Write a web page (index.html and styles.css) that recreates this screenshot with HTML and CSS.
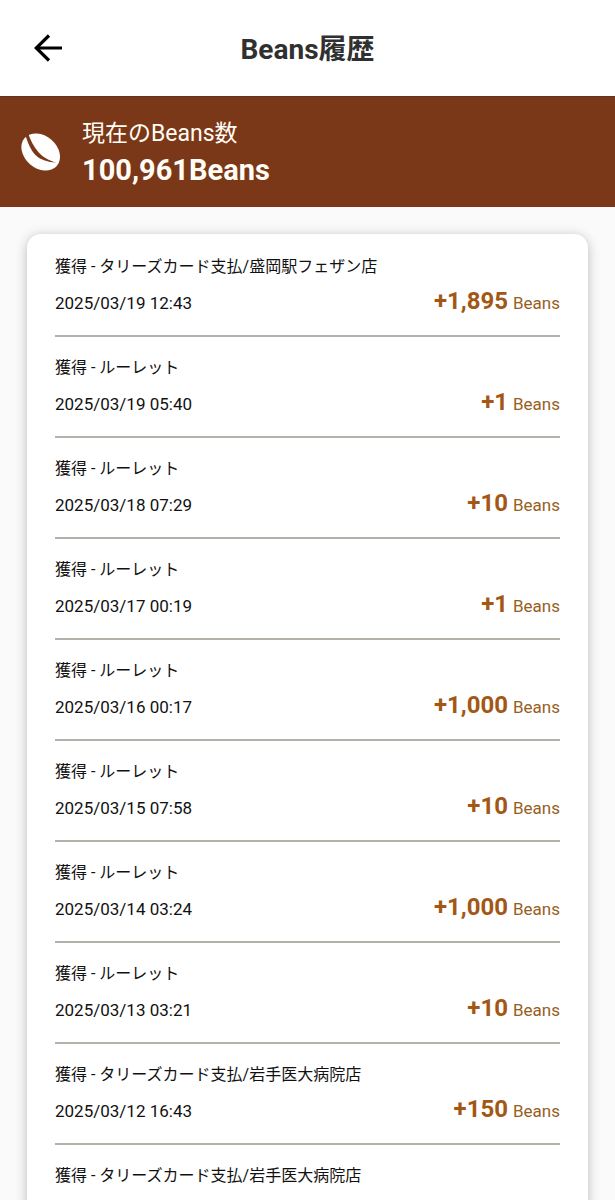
FILE: index.html
```html
<!DOCTYPE html>
<html lang="ja">
<head>
<meta charset="utf-8">
<meta name="viewport" content="width=device-width, initial-scale=1">
<title>Beans履歴</title>
<link rel="stylesheet" href="styles.css">
</head>
<body>
<header class="topbar">
  <button class="back" type="button" aria-label="戻る">
    <svg class="back-icon" viewBox="0 0 28 28" aria-hidden="true"><path d="M28 14H2M15 1.500L2.200 14L15 26.500" fill="none" stroke="currentColor" stroke-width="3.200"/></svg>
  </button>
  <h1 class="title">Beans履歴</h1>
</header>
<section class="balance">
  <svg class="bean" viewBox="0 0 40 38" aria-hidden="true">
    <ellipse cx="19.700" cy="19" rx="21.300" ry="16.300" transform="rotate(41 19.700 19)" fill="currentColor"/>
    <path class="bean-slit" d="M4.500 2.500L7.300 1C9.500 7 12.500 13.500 17.500 19.300C22 24.500 28 27.300 35 29.600C27 28.900 20 27.200 14.700 22.200C9.500 17 6.800 9.500 4.500 2.500Z"/>
  </svg>
  <div class="balance-text">
    <p class="balance-label">現在のBeans数</p>
    <p class="balance-value">100,961Beans</p>
  </div>
</section>
<main class="content">
  <ul class="history">
    <li class="entry"><p class="name">獲得 - タリーズカード支払/盛岡駅フェザン店</p><div class="detail"><time class="date">2025/03/19 12:43</time><p class="points"><strong class="amount">+1,895</strong><span class="unit">Beans</span></p></div></li>
    <li class="entry"><p class="name">獲得 - ルーレット</p><div class="detail"><time class="date">2025/03/19 05:40</time><p class="points"><strong class="amount">+1</strong><span class="unit">Beans</span></p></div></li>
    <li class="entry"><p class="name">獲得 - ルーレット</p><div class="detail"><time class="date">2025/03/18 07:29</time><p class="points"><strong class="amount">+10</strong><span class="unit">Beans</span></p></div></li>
    <li class="entry"><p class="name">獲得 - ルーレット</p><div class="detail"><time class="date">2025/03/17 00:19</time><p class="points"><strong class="amount">+1</strong><span class="unit">Beans</span></p></div></li>
    <li class="entry"><p class="name">獲得 - ルーレット</p><div class="detail"><time class="date">2025/03/16 00:17</time><p class="points"><strong class="amount">+1,000</strong><span class="unit">Beans</span></p></div></li>
    <li class="entry"><p class="name">獲得 - ルーレット</p><div class="detail"><time class="date">2025/03/15 07:58</time><p class="points"><strong class="amount">+10</strong><span class="unit">Beans</span></p></div></li>
    <li class="entry"><p class="name">獲得 - ルーレット</p><div class="detail"><time class="date">2025/03/14 03:24</time><p class="points"><strong class="amount">+1,000</strong><span class="unit">Beans</span></p></div></li>
    <li class="entry"><p class="name">獲得 - ルーレット</p><div class="detail"><time class="date">2025/03/13 03:21</time><p class="points"><strong class="amount">+10</strong><span class="unit">Beans</span></p></div></li>
    <li class="entry"><p class="name">獲得 - タリーズカード支払/岩手医大病院店</p><div class="detail"><time class="date">2025/03/12 16:43</time><p class="points"><strong class="amount">+150</strong><span class="unit">Beans</span></p></div></li>
    <li class="entry"><p class="name">獲得 - タリーズカード支払/岩手医大病院店</p></li>
  </ul>
</main>
</body>
</html>
```

FILE: styles.css
```css
* {
  box-sizing: border-box;
}

html {
  height: 100%;
}

body {
  display: flex;
  flex-direction: column;
  height: 100%;
  margin: 0;
  overflow: hidden;
  background: #fafafa;
  color: #111;
  font-family: Roboto, "Noto Sans CJK JP", sans-serif;
}

p,
h1,
ul {
  margin: 0;
  padding: 0;
}

.topbar {
  display: grid;
  grid-template-columns: 32px 1fr 32px;
  align-items: center;
  flex: none;
  padding: 28px 32px;
  background: #fff;
}

.back {
  display: flex;
  padding: 0 2px;
  border: 0;
  background: none;
  color: #000;
}

.back-icon {
  width: 28px;
  height: 28px;
}

.title {
  padding-top: 4px;
  color: #303030;
  font-size: 28px;
  line-height: 36px;
  font-weight: 700;
  text-align: center;
}

.balance {
  display: flex;
  align-items: center;
  gap: 21px;
  flex: none;
  padding: 19px 21px;
  border-top: 1px solid #60341d;
  background: #7b3818;
  color: #fffdf5;
}

.bean {
  width: 40px;
  height: 38px;
  color: #fff;
}

.bean-slit {
  fill: #7b3818;
}

.balance-label {
  font-size: 23px;
  line-height: 36px;
}

.balance-value {
  font-size: 29px;
  line-height: 36px;
  font-weight: 700;
}

.content {
  flex: 1;
  min-height: 0;
  padding: 27px 27px 0;
  overflow: hidden;
}

.history {
  padding: 2px 28px 28px;
  border-radius: 14px;
  background: #fff;
  box-shadow: 0 2px 12px rgba(0, 0, 0, 0.25);
  list-style: none;
}

.entry {
  padding: 16px 0 13px;
  border-bottom: 2px solid #b5b0aa;
}

.name {
  font-size: 16px;
  line-height: 30px;
}

.detail {
  display: flex;
  align-items: baseline;
  justify-content: space-between;
  line-height: 38px;
}

.date {
  font-size: 17px;
}

.points {
  display: flex;
  align-items: baseline;
  gap: 5px;
}

.amount {
  color: #a35715;
  font-size: 24px;
}

.unit {
  color: #976022;
  font-size: 17px;
}
```
